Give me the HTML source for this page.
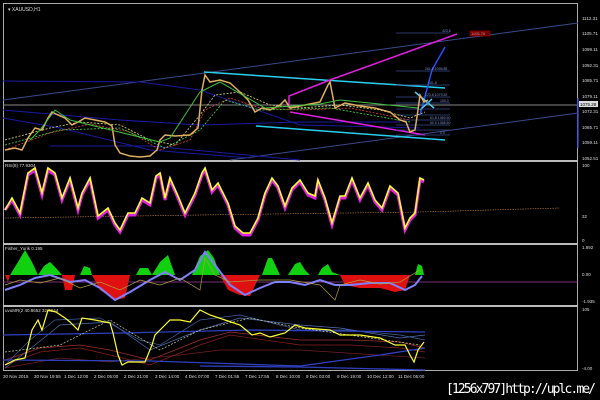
<!DOCTYPE html>
<html><head><style>
html,body{margin:0;padding:0;background:#000;width:600px;height:400px;overflow:hidden}
svg{display:block}
text{font-family:"Liberation Sans",sans-serif;fill:#ddd}
</style></head><body>
<svg width="600" height="400" viewBox="0 0 600 400">
<rect width="600" height="400" fill="#000"/>
<!-- frame -->
<g fill="none" stroke="#aaa" stroke-width="1">
<rect x="3.5" y="3.5" width="574" height="367"/>
</g>
<g stroke="#bbb" stroke-width="2">
<line x1="3" y1="161" x2="578" y2="161"/>
<line x1="3" y1="244" x2="578" y2="244"/>
<line x1="3" y1="306" x2="578" y2="306"/>
</g>
<text x="8" y="11" font-size="5">▾ XAUUSD,H1</text>
<!-- main chart lines -->
<g fill="none" stroke-width="1">
<line x1="3" y1="100" x2="578" y2="23" stroke="#3a4a8a"/>
<line x1="230" y1="160" x2="578" y2="113" stroke="#3a4a8a"/>
<line x1="3" y1="105" x2="578" y2="105" stroke="#888"/>
<polyline points="3,81 140,82 200,90 300,125 420,128" stroke="#1a1aa0"/>
<polyline points="3,110 120,120 200,125 300,122 400,122" stroke="#1a1aa0"/>
<polyline points="3,118 60,128 150,150 250,158" stroke="#1a1aa0"/>
<polyline points="50,146 150,146 300,160" stroke="#1a1aa0"/>
<line x1="204" y1="72" x2="445" y2="88" stroke="#2ad0f0" stroke-width="1.5"/>
<line x1="256" y1="126" x2="445" y2="140" stroke="#2ad0f0" stroke-width="1.5"/>
<polyline points="289,108 289,96 330,80 457,34" stroke="#e020e0" stroke-width="1.5"/>
<line x1="290" y1="112" x2="425" y2="135" stroke="#e020e0" stroke-width="1.5"/>
<polyline points="420,115 432,70 445,47" stroke="#2050ff" stroke-width="1.5"/>
<line x1="415" y1="92" x2="434" y2="108" stroke="#4ad0ff" stroke-width="1.5"/>
<line x1="420" y1="110" x2="432" y2="99" stroke="#4ad0ff" stroke-width="1.5"/>
</g>
<g stroke="#3a4a8a" stroke-width="0.8">
<line x1="396" y1="33" x2="450" y2="33"/><line x1="396" y1="71" x2="450" y2="71"/>
<line x1="396" y1="85" x2="450" y2="85"/><line x1="396" y1="97" x2="450" y2="97"/>
<line x1="396" y1="103" x2="450" y2="103"/><line x1="396" y1="109" x2="450" y2="109"/>
<line x1="396" y1="115" x2="450" y2="115"/><line x1="396" y1="120" x2="450" y2="120"/>
<line x1="396" y1="125" x2="450" y2="125"/><line x1="396" y1="130" x2="450" y2="130"/>
<line x1="396" y1="135" x2="450" y2="135"/>
</g>
<g font-size="3.5" fill="#8090d0">
<text x="442" y="32" style="fill:#8090d0">423.6</text>
<text x="425" y="70" style="fill:#8090d0">261.8 1095.85</text>
<text x="428" y="84" style="fill:#8090d0">161.8</text>
<text x="425" y="96" style="fill:#8090d0">123.6 1079.52</text>
<text x="440" y="102" style="fill:#8090d0">100.0</text>
<text x="430" y="119" style="fill:#8090d0">61.8 1069.90</text>
<text x="430" y="124" style="fill:#8090d0">50.0 1068.50</text>
<text x="440" y="134" style="fill:#8090d0">0.0</text>
</g>
<rect x="470" y="31" width="20" height="5" fill="#600" stroke="#c00" stroke-width="0.5"/>
<text x="471" y="35" font-size="4" style="fill:#f88">1105.70</text>
<!-- moving averages -->
<g fill="none" stroke-width="0.8" stroke-dasharray="2,1.5">
<polyline points="5,140 50,128 80,122 120,125 150,140 175,145 200,115 215,95 240,92 270,105 300,108 340,105 380,110 410,118 425,112" stroke="#e0e070"/>
<polyline points="5,150 50,133 90,124 130,132 160,150 190,140 205,110 230,98 260,108 300,110 350,108 410,120" stroke="#e04040"/>
<polyline points="5,145 60,130 120,128 165,148 200,130 225,100 260,110 330,108 410,122" stroke="#40e040"/>
</g>
<!-- price -->
<polyline fill="none" stroke="#e0b060" stroke-width="1.5" points="5,150 15,148 22,150 28,138 35,128 42,130 48,118 52,112 58,115 65,118 72,125 78,122 85,118 95,120 105,122 112,126 115,145 120,153 130,156 140,157 150,156 157,150 160,140 165,135 175,136 190,135 198,128 202,90 205,75 210,82 220,80 230,83 240,92 248,100 255,112 262,108 270,110 280,105 285,100 290,108 300,106 310,104 320,102 328,85 330,82 335,108 345,103 360,106 375,108 390,112 400,120 406,122 410,132 415,130 418,110 420,95 424,102 428,100"/>
<polyline fill="none" stroke="#40c040" stroke-width="1" points="30,140 40,130 55,110 70,120 160,142 170,138 200,92 220,82 265,108 320,104 340,100 418,108"/>
<!-- right axis -->
<g font-size="4.5">
<text x="582" y="20">1112.31</text><text x="582" y="35">1105.71</text>
<text x="582" y="51">1099.11</text><text x="582" y="67">1092.31</text>
<text x="582" y="82">1085.71</text><text x="582" y="98">1079.11</text>
<text x="582" y="113">1072.31</text><text x="582" y="129">1065.71</text>
<text x="582" y="144">1059.11</text><text x="582" y="160">1052.51</text>
</g>
<rect x="579" y="101" width="19" height="6" fill="#ddd"/>
<text x="580" y="106" font-size="4.5" style="fill:#000">1075.28</text>
<line x1="578" y1="98" x2="578" y2="148" stroke="#3040c0" stroke-width="1.5"/>
<!-- RSI -->
<text x="5" y="167" font-size="4.5">RSI(8) 77.9304</text>
<g font-size="4.5"><text x="582" y="167">100</text><text x="582" y="218">32</text><text x="582" y="242">0</text></g>
<polyline fill="none" stroke="#c08040" stroke-width="0.6" stroke-dasharray="1.5,1" points="5,218 200,215 420,212 560,208"/>
<polyline fill="none" stroke="#e020e0" stroke-width="3" points="5,210 12,200 20,215 28,175 35,170 42,195 48,170 55,175 62,200 70,180 78,210 82,195 90,180 98,218 108,210 115,225 120,232 128,215 135,215 142,200 150,205 156,178 160,175 165,200 170,180 178,198 185,215 195,195 202,175 205,170 212,192 218,185 228,205 235,228 243,235 250,235 258,220 265,195 272,180 278,188 285,208 292,190 300,182 308,195 315,198 318,182 325,200 332,225 340,198 345,198 352,180 360,200 368,185 375,202 382,210 390,188 398,195 405,230 410,220 415,215 420,180 424,182"/>
<polyline fill="none" stroke="#ffff30" stroke-width="1.6" points="5,210 12,198 20,213 28,173 35,168 42,193 48,168 55,173 62,198 70,178 78,208 82,193 90,178 98,216 108,208 115,223 120,230 128,213 135,213 142,198 150,203 156,176 160,173 165,198 170,178 178,196 185,213 195,193 202,173 205,168 212,190 218,183 228,203 235,226 243,233 250,233 258,218 265,193 272,178 278,186 285,206 292,188 300,180 308,193 315,196 318,180 325,198 332,223 340,196 345,196 352,178 360,198 368,183 375,200 382,208 390,186 398,193 405,228 410,218 415,213 420,178 424,180"/>
<!-- Fisher -->
<text x="5" y="250" font-size="4.5">Fisher_Yurik 0.195</text>
<g font-size="4.5"><text x="582" y="249">1.892</text><text x="582" y="276">0.00</text><text x="582" y="303">-1.935</text></g>
<line x1="3" y1="282" x2="578" y2="282" stroke="#a040a0" stroke-width="0.7"/>
<g fill="#10d010">
<polygon points="10,275 18,262 25,250 32,262 38,275"/>
<polygon points="38,275 44,266 50,262 56,268 62,275"/>
<polygon points="80,275 84,266 90,268 92,275"/>
<polygon points="136,275 140,268 148,268 152,275"/>
<polygon points="152,275 160,262 168,255 175,275"/>
<polygon points="192,275 200,256 208,250 214,258 220,275"/>
<polygon points="262,275 268,258 272,258 280,275"/>
<polygon points="288,275 295,264 300,262 305,270 310,275"/>
<polygon points="318,275 322,268 328,264 332,272 340,275"/>
<polygon points="415,275 418,264 422,266 424,275"/>
</g>
<g fill="#e01010">
<polygon points="5,275 10,275 8,282"/>
<polygon points="62,275 75,275 72,290 65,290"/>
<polygon points="92,275 130,275 125,298 115,300 100,290"/>
<polygon points="220,275 260,275 250,296 240,295 228,290"/>
<polygon points="340,275 410,275 405,290 395,292 380,288 360,288 345,285"/>
</g>
<polyline fill="none" stroke="#8080ff" stroke-width="2" points="5,290 20,285 35,278 50,275 70,282 85,280 100,288 115,300 130,292 150,280 165,272 180,280 195,270 205,252 215,265 230,285 245,295 260,288 275,282 290,282 305,285 320,280 335,285 350,285 370,283 390,283 405,290 415,285 422,276"/>
<polyline fill="none" stroke="#b0a040" stroke-width="0.7" points="5,285 20,280 40,283 60,278 80,288 100,282 120,290 140,280 160,285 180,278 200,290 205,258 215,275 230,282 260,280 290,280 320,285 335,300 340,285 360,280 380,284 400,282 420,270"/>
<!-- third panel -->
<text x="5" y="312" font-size="4.5">uvuMR(2 40.8652 32.4944</text>
<g font-size="4.5"><text x="582" y="311">105</text><text x="582" y="370">-4.00</text></g>
<g fill="none" stroke-width="0.7">
<polyline stroke="#8a2020" points="5,365 40,352 80,348 110,355 150,365 200,345 230,335 300,345 350,345 400,348 425,352"/>
<polyline stroke="#a03030" points="5,360 40,348 80,345 110,350 150,360 200,340 230,332 300,340 350,340 400,342 425,348"/>
<polyline stroke="#702020" points="5,368 60,358 110,362 180,355 220,350 300,350 425,358"/>
<polyline stroke="#4060a0" points="5,365 30,340 55,320 100,318 140,340 160,345 200,320 240,315 300,330 350,330 400,335 425,340"/>
<polyline stroke="#5070b0" points="5,368 35,345 60,325 110,322 150,350 200,330 240,318 300,325 340,328 400,338 425,335"/>
<polyline stroke="#3040c0" stroke-width="1.3" points="3,335 120,333 250,330 425,332"/>
<polyline stroke="#3040c0" stroke-width="1.3" points="3,360 150,361 300,366 380,355 425,348"/>
<polyline stroke="#3040c0" stroke-width="1.3" points="200,366 300,367 425,370"/>
<polyline stroke="#d0d0a0" stroke-dasharray="2,1.5" points="5,352 60,345 110,320 160,350 200,330 250,318 300,328 420,345"/>
<polyline stroke="#ffff30" stroke-width="1.2" points="5,365 15,360 25,358 32,330 38,320 42,330 48,310 56,312 65,318 70,322 78,330 82,318 95,320 110,323 113,333 118,355 122,365 128,362 135,362 145,362 152,345 155,335 160,330 170,320 180,320 190,322 200,310 210,315 225,320 240,325 252,335 260,333 270,337 285,333 295,325 305,328 330,330 340,335 348,335 360,335 380,338 395,345 405,345 410,355 414,362 418,350 424,342"/>
</g>
<!-- x axis -->
<g font-size="4.5">
<text x="3" y="378">30 Nov 2015</text><text x="34" y="378">30 Nov 19:55</text>
<text x="64" y="378">1 Dec 12:00</text><text x="94" y="378">2 Dec 05:00</text>
<text x="124" y="378">2 Dec 21:00</text><text x="155" y="378">3 Dec 14:00</text>
<text x="185" y="378">4 Dec 07:00</text><text x="215" y="378">7 Dec 01:55</text>
<text x="245" y="378">7 Dec 17:55</text><text x="276" y="378">8 Dec 10:00</text>
<text x="306" y="378">9 Dec 03:00</text><text x="337" y="378">9 Dec 19:00</text>
<text x="367" y="378">10 Dec 12:00</text><text x="398" y="378">11 Dec 05:00</text>
</g>
<text x="446" y="393" font-size="13" style="fill:#fff;font-family:'DejaVu Sans Mono','Liberation Mono',monospace" textLength="150">[1256x797]http://uplc.me/</text>
</svg>
</body></html>
